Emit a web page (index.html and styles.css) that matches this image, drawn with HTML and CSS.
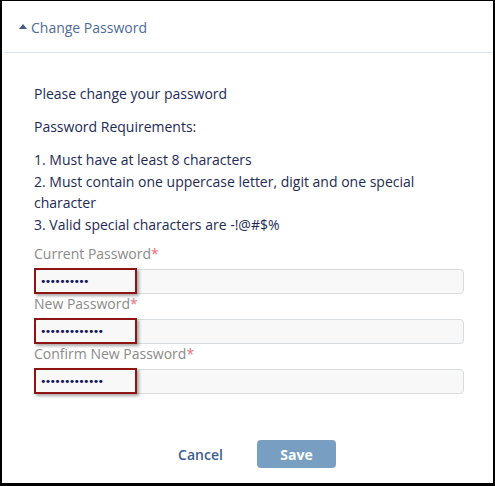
FILE: index.html
```html
<!DOCTYPE html>
<html lang="en">
<head>
<meta charset="utf-8">
<title>Change Password</title>
<link rel="stylesheet" href="styles.css">
</head>
<body>
<div class="panel">
  <div class="panel-header">
    <span class="caret"></span>
    <span class="panel-title">Change Password</span>
  </div>
  <div class="panel-body">
    <p class="para">Please change your password</p>
    <p class="para">Password Requirements:</p>
    <p class="para list">1. Must have at least 8 characters<br>2. Must contain one uppercase letter, digit and one special character<br>3. Valid special characters are -!@#$%</p>
    <div class="field">
      <label class="label">Current Password<span class="req">*</span></label>
      <div class="input-wrap">
        <input class="input" type="password" value="abcdefghij">
        <span class="highlight"></span>
      </div>
    </div>
    <div class="field">
      <label class="label">New Password<span class="req">*</span></label>
      <div class="input-wrap">
        <input class="input" type="password" value="abcdefghijklm">
        <span class="highlight"></span>
      </div>
    </div>
    <div class="field">
      <label class="label">Confirm New Password<span class="req">*</span></label>
      <div class="input-wrap">
        <input class="input" type="password" value="abcdefghijklm">
        <span class="highlight"></span>
      </div>
    </div>
  </div>
  <div class="panel-footer">
    <button class="btn btn-link" type="button">Cancel</button>
    <button class="btn btn-primary" type="button">Save</button>
  </div>
</div>
</body>
</html>
```

FILE: styles.css
```css
html, body {
  margin: 0;
  padding: 0;
  background: #ffffff;
}
body {
  font-family: "Open Sans", "Liberation Sans", sans-serif;
  font-size: 14px;
  color: #1e2a55;
}
.panel {
  box-sizing: border-box;
  width: 495px;
  height: 486px;
  border-style: solid;
  border-color: #000;
  border-width: 1px 2px 3px 2px;
  display: flex;
  flex-direction: column;
  background: #fff;
}
.panel-header {
  height: 51px;
  border-bottom: 1px solid #dde3ec;
  display: flex;
  align-items: center;
  padding-left: 15px;
  margin-left: 2px;
  gap: 4px;
}
.caret {
  width: 0;
  height: 0;
  border-left: 4.5px solid transparent;
  border-right: 4.5px solid transparent;
  border-bottom: 5px solid #3e5f8e;
  margin-top: 0;
}
.panel-title {
  color: #4d6b98;
  font-size: 14px;
  line-height: 20px;
  margin-top: 2px;
}
.panel-body {
  padding: 30px 29px 0 32px;
}
.para {
  margin: 0 0 11.5px 0;
  line-height: 21.5px;
}
.list {
  margin-bottom: 9px;
}
.field {
  display: flex;
  flex-direction: column;
}
.label {
  color: #8a8a8a;
  line-height: 20px;
  height: 20px;
}
.req {
  color: #e8707c;
}
.input-wrap {
  position: relative;
  margin-top: 5px;
  height: 25px;
}
.input {
  box-sizing: border-box;
  width: 100%;
  height: 25px;
  margin: 0;
  padding: 0 5px;
  border: 1px solid #d9dcdf;
  border-radius: 4px;
  background: #f8f8f8;
  font-family: "DejaVu Sans", sans-serif;
  font-size: 11px;
  letter-spacing: -1.7px;
  color: #14145a;
  outline: none;
}
.highlight {
  position: absolute;
  left: 0;
  top: -1px;
  width: 103px;
  height: 26px;
  box-sizing: border-box;
  border: 2px solid #8e1414;
  box-shadow: 2px 2px 3px rgba(0, 0, 0, 0.35);
  pointer-events: none;
}
.panel-footer {
  margin-top: auto;
  display: flex;
  justify-content: center;
  align-items: center;
  gap: 17px;
  padding: 0 0 15px 2px;
}
.btn {
  font-family: "Open Sans", "Liberation Sans", sans-serif;
  font-size: 14px;
  height: 28px;
  width: 79px;
  border: none;
  border-radius: 4px;
  padding: 0;
  cursor: pointer;
}
.btn-link {
  background: transparent;
  color: #3d5f8f;
  font-weight: 600;
}
.btn-primary {
  background: #789fc2;
  color: #ffffff;
  font-weight: 700;
}
```
